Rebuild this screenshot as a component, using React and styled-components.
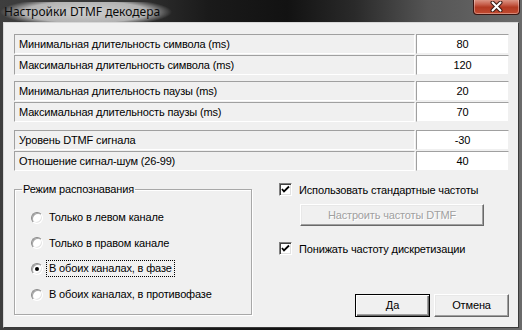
import React from 'react';
import styled, { createGlobalStyle } from 'styled-components';

const Global = createGlobalStyle`
  html, body { margin: 0; padding: 0; background: #2a2a2a; }
  body {
    width: 522px; height: 330px; overflow: hidden;
    font-family: "Liberation Sans", Arial, sans-serif;
    font-size: 11px; color: #000;
    letter-spacing: -0.15px;
  }
  * { box-sizing: border-box; }
`;

const Window = styled.div`
  width: 522px;
  height: 330px;
  display: flex;
  flex-direction: column;
  background:
    linear-gradient(90deg, #3e3e3e 0%, #333 25%, #1a1a1a 40%, #121212 55%, #2a2a2a 68%, #555 82%, #6a6a6a 100%);
`;

const TitleBar = styled.div`
  height: 23px;
  display: flex;
  align-items: flex-start;
  justify-content: space-between;
  padding: 0 2px 0 0;
`;

const Title = styled.span`
  margin-top: 2px;
  height: 20px;
  line-height: 19px;
  padding: 0 12px 0 4px;
  font-family: "Noto Sans", "Open Sans", sans-serif;
  font-size: 12px;
  letter-spacing: 0;
  color: #0a0a0a;
  background: radial-gradient(ellipse closest-side, rgba(215,215,215,0.95) 0%, rgba(200,200,200,0.85) 72%, rgba(190,190,190,0) 100%);
  background-size: 100% 150%;
  background-position: center;
  border-radius: 10px;
`;

const CloseButton = styled.div`
  width: 47px;
  height: 16px;
  margin-top: -1px;
  border: 1px solid #3a1410;
  border-top: none;
  border-radius: 0 0 4px 4px;
  background: linear-gradient(180deg, #e0a090 0%, #c8624e 35%, #b23a22 55%, #c24a30 100%);
  box-shadow: inset 0 0 0 1px rgba(255,255,255,0.35);
  display: flex;
  align-items: center;
  justify-content: center;
`;

const Client = styled.div`
  flex: 1;
  margin: 0 3px 3px 3px;
  background: #f0f0f0;
  border: 1px solid;
  border-color: #d8d8d8 #3a3a3a #3a3a3a #d8d8d8;
  padding: 11px 9px 9px 10px;
  display: flex;
  flex-direction: column;
`;

const ParamGroup = styled.div`
  display: flex;
  flex-direction: column;
  gap: 1px;
  margin-top: ${p => p.$gap || 0}px;
`;

const ParamRow = styled.div`
  display: grid;
  grid-template-columns: 401px 1fr;
  column-gap: 1px;
  height: 20px;
`;

const Label = styled.div`
  border: 1px solid;
  border-color: #a0a0a0 #ffffff #ffffff #a0a0a0;
  background: #f0f0f0;
  padding: 0 4px;
  line-height: 18px;
  white-space: nowrap;
`;

const Value = styled.div`
  border: 1px solid;
  border-color: #a0a0a0 #f0f0f0 #f0f0f0 #a0a0a0;
  background: #fff;
  text-align: center;
  line-height: 18px;
`;

const Lower = styled.div`
  flex: 1;
  display: grid;
  grid-template-columns: 238px 1fr;
  column-gap: 27px;
  margin-top: 12px;
`;

const Group = styled.fieldset`
  margin: 0;
  padding: 15px 0 0 16px;
  border: 1px solid #a8a8a8;
  box-shadow: inset 1px 1px 0 #fff, 1px 1px 0 #fff;
  display: flex;
  flex-direction: column;
  min-width: 0;
  margin-bottom: 3px;
`;

const Legend = styled.legend`
  padding: 0 1px;
  margin-left: -9px;
  line-height: 13px;
`;

const RadioItem = styled.div`
  display: flex;
  align-items: center;
  gap: 5px;
  height: 13px;
  margin-bottom: 12.7px;
`;

const RadioCircle = styled.span`
  width: 12px;
  height: 12px;
  border-radius: 50%;
  border: 1px solid;
  border-color: #8a8a8a #ffffff #ffffff #8a8a8a;
  box-shadow: inset 1px 1px 0 #a8a8a8, inset -1px -1px 0 #e4e4e4;
  background: #fff;
  display: flex;
  align-items: center;
  justify-content: center;
  flex: none;
  &::after {
    content: "";
    width: 4px;
    height: 4px;
    border-radius: 50%;
    background: ${p => (p.$checked ? '#000' : 'transparent')};
  }
`;

const RadioText = styled.span`
  padding: 0 1px;
  line-height: 13px;
  outline: ${p => (p.$focused ? '1px dotted #000' : 'none')};
  outline-offset: 1px;
`;

const RightCol = styled.div`
  display: flex;
  flex-direction: column;
  align-items: flex-start;
`;

const CheckRow = styled.div`
  display: flex;
  align-items: center;
  gap: 7px;
  height: 13px;
  margin-top: ${p => p.$top || 0}px;
`;

const CheckBox = styled.span`
  width: 13px;
  height: 13px;
  border: 1px solid;
  border-color: #808080 #ffffff #ffffff #808080;
  box-shadow: inset 1px 1px 0 #404040, inset -1px -1px 0 #e0e0e0;
  background: #fff;
  display: flex;
  align-items: center;
  justify-content: center;
  flex: none;
`;

const WinButton = styled.button`
  font-family: "Liberation Sans", Arial, sans-serif;
  font-size: 11px;
  letter-spacing: -0.15px;
  width: ${p => p.$w}px;
  height: ${p => p.$h}px;
  margin: 0;
  padding: 0;
  background: #f0f0f0;
  color: ${p => (p.disabled ? '#a0a0a0' : '#000')};
  text-shadow: ${p => (p.disabled ? '1px 1px 0 #fff' : 'none')};
  border: 1px solid;
  border-color: ${p => (p.$default ? '#000' : '#fff #696969 #696969 #fff')};
  box-shadow: ${p =>
    p.$default
      ? 'inset 1px 1px 0 #fff, inset -1px -1px 0 #696969, inset -2px -2px 0 #a0a0a0'
      : 'inset -1px -1px 0 #a0a0a0, inset 1px 1px 0 #e8e8e8'};
`;

const ConfigButton = styled(WinButton)`
  margin: 8px 0 0 21px;
`;

const ButtonRow = styled.div`
  margin-top: auto;
  align-self: flex-end;
  display: flex;
  gap: 4px;
  margin-bottom: 1px;
`;

const Check = () => (
  <svg width="9" height="9" viewBox="0 0 9 9">
    <path d="M1 4 L3 6.5 L8 1.5" fill="none" stroke="#000" strokeWidth="1.8" />
  </svg>
);

const CloseX = () => (
  <svg width="13" height="11" viewBox="0 0 13 11">
    <path d="M2.5 1.5 L10.5 9.5 M10.5 1.5 L2.5 9.5" stroke="#3a1a14" strokeWidth="4" strokeLinecap="round" />
    <path d="M2.5 1.5 L10.5 9.5 M10.5 1.5 L2.5 9.5" stroke="#fff" strokeWidth="2" strokeLinecap="round" />
  </svg>
);

const params = [
  [
    ['Минимальная длительность символа (ms)', '80'],
    ['Максимальная длительность символа (ms)', '120'],
  ],
  [
    ['Минимальная длительность паузы (ms)', '20'],
    ['Максимальная длительность паузы (ms)', '70'],
  ],
  [
    ['Уровень DTMF сигнала', '-30'],
    ['Отношение сигнал-шум (26-99)', '40'],
  ],
];

const radios = [
  'Только в левом канале',
  'Только в правом канале',
  'В обоих каналах, в фазе',
  'В обоих каналах, в противофазе',
];

export default function App() {
  return (
    <>
      <Global />
      <Window>
        <TitleBar>
          <Title>Настройки DTMF декодера</Title>
          <CloseButton>
            <CloseX />
          </CloseButton>
        </TitleBar>
        <Client>
          {params.map((group, gi) => (
            <ParamGroup key={gi} $gap={gi === 0 ? 0 : gi === 1 ? 6 : 8}>
              {group.map(([label, value]) => (
                <ParamRow key={label}>
                  <Label>{label}</Label>
                  <Value>{value}</Value>
                </ParamRow>
              ))}
            </ParamGroup>
          ))}
          <Lower>
            <Group>
              <Legend>Режим распознавания</Legend>
              {radios.map((r, i) => (
                <RadioItem key={r}>
                  <RadioCircle $checked={i === 2} />
                  <RadioText $focused={i === 2}>{r}</RadioText>
                </RadioItem>
              ))}
            </Group>
            <RightCol>
              <CheckRow>
                <CheckBox><Check /></CheckBox>
                <span>Использовать стандартные частоты</span>
              </CheckRow>
              <ConfigButton disabled $w={184} $h={22}>Настроить частоты DTMF</ConfigButton>
              <CheckRow $top={16}>
                <CheckBox><Check /></CheckBox>
                <span>Понижать частоту дискретизации</span>
              </CheckRow>
              <ButtonRow>
                <WinButton $default $w={75} $h={23}>Да</WinButton>
                <WinButton $w={75} $h={23}>Отмена</WinButton>
              </ButtonRow>
            </RightCol>
          </Lower>
        </Client>
      </Window>
    </>
  );
}
